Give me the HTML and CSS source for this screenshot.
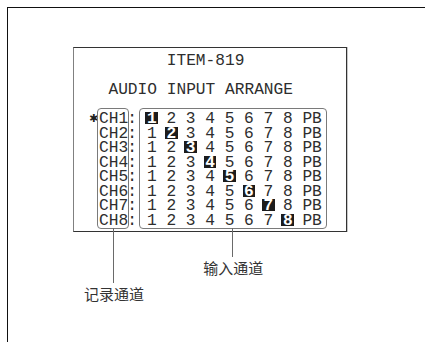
FILE: index.html
```html
<!DOCTYPE html>
<html>
<head>
  <link rel="stylesheet" href="styles.css">
</head>

<body>
  <div class="page">
    <div class="screen">
      <div class="title">        ITEM-819</div>
      <div class="title subtitle">  AUDIO INPUT ARRANGE</div>

      <div class="matrix">
        <div class="marks">
          <div class="star">✱</div>
        </div>

        <div class="box chs">
          <div>CH1</div>
          <div>CH2</div>
          <div>CH3</div>
          <div>CH4</div>
          <div>CH5</div>
          <div>CH6</div>
          <div>CH7</div>
          <div>CH8</div>
          <span class="callout callout-rec">
            <i class="lead"></i>
            <span class="tag">记录通道</span>
          </span>
        </div>

        <div class="colons">
          <div>:</div><div>:</div><div>:</div><div>:</div>
          <div>:</div><div>:</div><div>:</div><div>:</div>
        </div>

        <div class="box inputs">
          <div class="row"><b class="hl">1</b> 2 3 4 5 6 7 8 PB</div>
          <div class="row">1 <b class="hl">2</b> 3 4 5 6 7 8 PB</div>
          <div class="row">1 2 <b class="hl">3</b> 4 5 6 7 8 PB</div>
          <div class="row">1 2 3 <b class="hl">4</b> 5 6 7 8 PB</div>
          <div class="row">1 2 3 4 <b class="hl">5</b> 6 7 8 PB</div>
          <div class="row">1 2 3 4 5 <b class="hl">6</b> 7 8 PB</div>
          <div class="row">1 2 3 4 5 6 <b class="hl">7</b> 8 PB</div>
          <div class="row">1 2 3 4 5 6 7 <b class="hl">8</b> PB</div>
          <span class="callout callout-in">
            <i class="lead"></i>
            <span class="tag">输入通道</span>
          </span>
        </div>
      </div>
    </div>
  </div>
</body>
</html>
```

FILE: styles.css
```css
html, body {
  margin: 0;
  padding: 0;
  background: #fff;
}

/* page frame: only top and left rules */
.page {
  margin: 7px 0 0 7px;
  height: 335px;
  box-sizing: border-box;
  border-top: 1px solid #111;
  border-left: 1px solid #111;
  padding: 39px 0 0 65px;
}

/* the OSD screen */
.screen {
  width: 274px;
  box-sizing: border-box;
  border: 1px solid #333;
  border-left-color: #808080;
  box-shadow: 1px 0 0 #c8c8c8;
  padding: 6px 0 2px 15px;
  font-family: "Liberation Mono", "DejaVu Sans Mono", monospace;
  font-size: 16.2px;
  line-height: 14.5px;
  color: #2e2e2e;
}

.title {
  white-space: pre;
}

.subtitle {
  margin-top: 14.5px;
}

.matrix {
  margin-top: 10.5px;
  display: flex;
  align-items: flex-start;
}

.marks {
  width: 8px;
  padding-top: 4px;
}

.star {
  height: 14.5px;
  margin-left: 0;
  font-family: "DejaVu Sans", sans-serif;
  font-size: 11px;
  line-height: 13px;
  color: #222;
}

.colons {
  width: 10px;
  padding-top: 4px;
  text-indent: -1.8px;
}

.box {
  position: relative;
  border: 1px solid #7a7a7a;
  border-radius: 4px;
  padding-top: 3px;
}

.chs {
  padding-left: 1px;
}

.inputs {
  padding-left: 6.8px;
  padding-right: 4.2px;
}

.row {
  white-space: pre;
}

.hl {
  display: inline-block;
  vertical-align: top;
  height: 12px;
  padding: 0 1.5px;
  margin: 0 -1.5px;
  background: #1c1c1c;
  color: #fff;
  font-weight: bold;
}

/* leader lines with their labels */
.callout {
  position: absolute;
  top: 100%;
  width: 0;
  display: flex;
  flex-direction: column;
  align-items: center;
}

.callout-rec {
  left: 50%;
}

.callout-in {
  left: 92px;
}

.lead {
  display: block;
  width: 1px;
  background: #6a6a6a;
}

.callout-rec .lead {
  height: 55px;
}

.callout-in .lead {
  height: 29px;
}

.tag {
  display: block;
  margin-top: 3px;
  white-space: nowrap;
  font-family: "Noto Sans CJK SC", "Noto Sans", sans-serif;
  font-size: 15px;
  line-height: 15px;
  color: #333;
  text-indent: 2px;
}
```
